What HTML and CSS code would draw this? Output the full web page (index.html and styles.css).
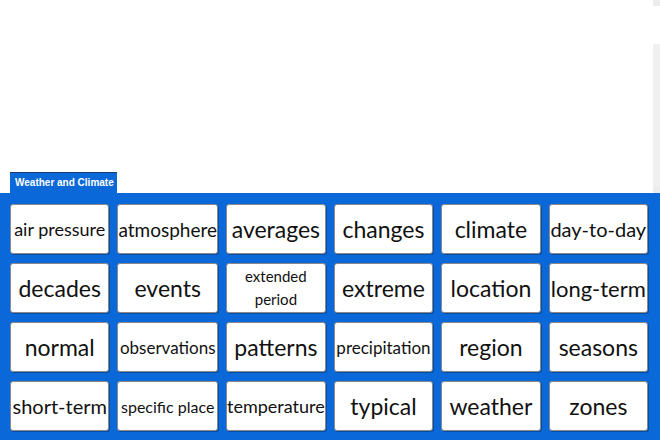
FILE: index.html
```html
<!DOCTYPE html>
<html lang="en">
<head>
    <meta charset="UTF-8">
    <meta name="viewport" content="width=device-width, initial-scale=1.0">
    <title>Weather and Climate</title>
    <link rel="stylesheet" href="styles.css">
</head>
<body>
    <!-- upper frame, only the tab lives at its bottom -->
    <section class="frame">
        <div class="tab">Weather and Climate</div>
        <div class="scrollbar" aria-hidden="true">
            <span class="arrow up"></span>
            <span class="thumb"></span>
            <span class="arrow down"></span>
        </div>
    </section>

    <!-- word bank -->
    <section class="panel">
        <div class="card fit-18">air pressure</div>
        <div class="card fit-19">atmosphere</div>
        <div class="card">averages</div>
        <div class="card">changes</div>
        <div class="card">climate</div>
        <div class="card fit-20">day-to-day</div>

        <div class="card">decades</div>
        <div class="card">events</div>
        <div class="card two-line">extended period</div>
        <div class="card">extreme</div>
        <div class="card">location</div>
        <div class="card fit-22">long-term</div>

        <div class="card">normal</div>
        <div class="card fit-17">observations</div>
        <div class="card">patterns</div>
        <div class="card fit-17">precipitation</div>
        <div class="card">region</div>
        <div class="card">seasons</div>

        <div class="card fit-20">short-term</div>
        <div class="card fit-16">specific place</div>
        <div class="card fit-18">temperature</div>
        <div class="card">typical</div>
        <div class="card">weather</div>
        <div class="card">zones</div>
    </section>
</body>
</html>
```

FILE: styles.css
```css
* {
    margin: 0;
    padding: 0;
    box-sizing: border-box;
}

body {
    width: 660px;
    height: 440px;
    overflow: hidden;
    background-color: #ffffff;
    font-family: 'Lato', 'Noto Sans', sans-serif;
}

.frame {
    position: relative;
    height: 193px;
    display: flex;
    align-items: flex-end;
    padding-left: 10px;
}

.tab {
    height: 21px;
    padding: 0 3px 0 5px;
    background-color: #0a68d8;
    border-top: 1px solid #173d6e;
    color: #ffffff;
    font-family: 'Liberation Sans', Arial, sans-serif;
    font-weight: bold;
    font-size: 10px;
    line-height: 20px;
}

/* thin scrollbar of the upper frame */
.scrollbar {
    position: absolute;
    top: 0;
    right: 0;
    width: 7px;
    height: 193px;
    display: flex;
    flex-direction: column;
}

.scrollbar .arrow {
    height: 6px;
    background-color: #ececec;
}

.scrollbar .thumb {
    flex: 1;
    margin-top: 38px;
    background-color: #f0f0f0;
}

.panel {
    height: 247px;
    background-color: #0a68d8;
    padding: 11px 12px 0 10px;
    display: grid;
    grid-template-columns: repeat(6, 1fr);
    grid-template-rows: repeat(4, 50px);
    column-gap: 8px;
    row-gap: 9px;
}

.card {
    background-color: #ffffff;
    border: 1px solid #8a8a8a;
    border-radius: 3px;
    box-shadow: 1px 1px 0 rgba(0, 0, 0, 0.25);
    display: flex;
    align-items: center;
    justify-content: center;
    text-align: center;
    color: #111111;
    font-size: 23px;
    white-space: nowrap;
}

/* long words are shrunk to fit the card */
.card.fit-22 { font-size: 22px; }
.card.fit-20 { font-size: 20px; }
.card.fit-19 { font-size: 19px; }
.card.fit-18 { font-size: 18px; }
.card.fit-17 { font-size: 17px; }
.card.fit-16 { font-size: 16px; }

.card.two-line {
    white-space: normal;
    font-size: 15px;
    line-height: 23px;
    padding: 0 18px;
}
```
